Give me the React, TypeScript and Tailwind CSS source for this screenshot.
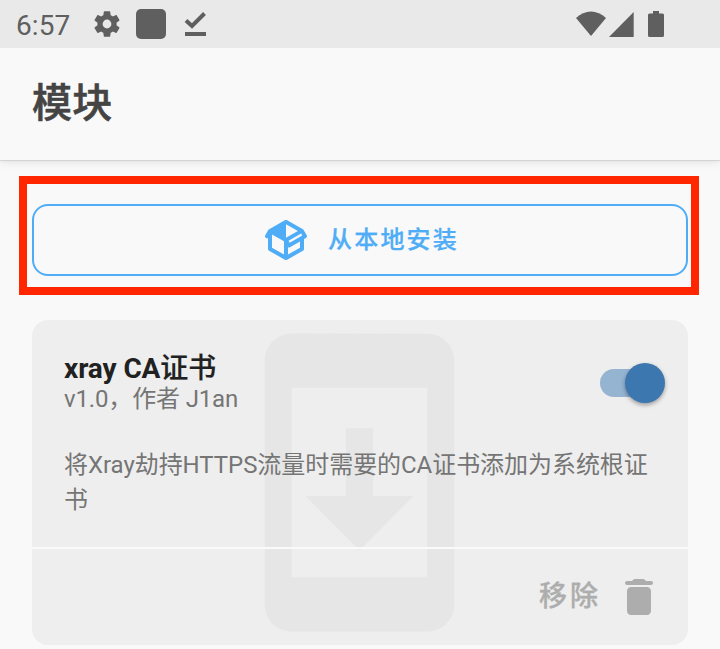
import React from "react";

function StatusBar() {
  return (
    <div className="relative z-10 flex h-12 items-start bg-[#e9e9e9] text-[#5f5f5f]">
      <span className="ml-4 mt-2 w-[74px] whitespace-nowrap text-[28px] leading-9 tracking-[0.1px]">6:57</span>
      <svg className="ml-px mt-2 size-8" viewBox="0 0 24 24" fill="currentColor">
        <path d="M19.14 12.94c.04-.3.06-.61.06-.94 0-.32-.02-.64-.07-.94l2.03-1.58c.18-.14.23-.41.12-.61l-1.92-3.32c-.12-.22-.37-.29-.59-.22l-2.39.96c-.5-.38-1.03-.7-1.62-.94l-.36-2.54c-.04-.24-.24-.41-.48-.41h-3.84c-.24 0-.43.17-.47.41l-.36 2.54c-.59.24-1.13.57-1.62.94l-2.39-.96c-.22-.08-.47 0-.59.22L2.74 8.87c-.12.21-.08.47.12.61l2.03 1.58c-.05.3-.09.63-.09.94s.02.64.07.94l-2.03 1.58c-.18.14-.23.41-.12.61l1.92 3.32c.12.22.37.29.59.22l2.39-.96c.5.38 1.03.7 1.62.94l.36 2.54c.05.24.24.41.48.41h3.84c.24 0 .44-.17.47-.41l.36-2.54c.59-.24 1.13-.56 1.62-.94l2.39.96c.22.08.47 0 .59-.22l1.92-3.32c.12-.22.07-.47-.12-.61l-2.01-1.58zM12 15.3a3.3 3.3 0 1 1 0-6.6 3.3 3.3 0 0 1 0 6.6z" />
      </svg>
      <div className="ml-[13px] mt-[9px] h-[30px] w-[30px] rounded-[5px] bg-[#5f5f5f]" />
      <svg className="ml-[18px] mt-[10px] h-7 w-6" viewBox="0 0 24 28" fill="none" stroke="currentColor">
        <path d="M2 10.500L8 16L20.500 3.500" strokeWidth="4" />
        <path d="M1 24H22" strokeWidth="4" />
      </svg>
      <svg className="ml-auto mr-[54px] mt-2 h-8 w-[90px]" viewBox="0 0 90 32" fill="currentColor">
        <path d="M0 10C9 1.200 21 1.200 30 10L15 28Z" />
        <path d="M33 29L57.700 4V29Z" />
        <path d="M77 3h6v2.500h3.500q1.500 0 1.500 1.500v20.500q0 1.500-1.500 1.500h-13q-1.500 0-1.500-1.500V7q0-1.500 1.500-1.500h3.500z" />
      </svg>
    </div>
  );
}

function InstallButton() {
  return (
    <div className="ml-[19px] mt-4 h-[119px] w-[680px] border-8 border-[#ff2600] px-[5px] pt-5">
      <button className="flex h-[72px] w-[656px] items-center rounded-2xl border-2 border-[#4fadf7] pl-[228px] text-[#4fadf7]">
        <svg className="size-12 shrink-0" viewBox="0 0 24 24" fill="currentColor">
          <path d="M2,10.96C1.5,10.68 1.35,10.07 1.63,9.59L3.13,7C3.24,6.8 3.41,6.66 3.6,6.58L11.43,2.18C11.59,2.06 11.79,2 12,2C12.21,2 12.41,2.06 12.57,2.18L20.47,6.62C20.66,6.72 20.82,6.88 20.91,7.08L22.36,9.6C22.64,10.08 22.47,10.69 22,10.96L21,11.54V16.5C21,16.88 20.79,17.21 20.47,17.38L12.57,21.82C12.41,21.94 12.21,22 12,22C11.79,22 11.59,21.94 11.43,21.82L3.53,17.38C3.21,17.21 3,16.88 3,16.5V10.96C2.7,11.13 2.32,11.14 2,10.96M12,4.15V10.85L17.96,7.5L12,4.15M5,15.91L11,19.29V12.58L5,9.21V15.91M19,15.91V12.69L14,15.59C13.67,15.77 13.3,15.76 13,15.6V19.29L19,15.91M13.85,13.36L20.13,9.73L19.55,8.72L13.27,12.35L13.85,13.36Z" />
        </svg>
        <span className="ml-[18px] whitespace-nowrap text-2xl font-medium tracking-[2.2px] [-webkit-text-stroke:0.25px_currentColor]">从本地安装</span>
      </button>
    </div>
  );
}

function Toggle() {
  return (
    <div className="mr-[23px] mt-[43px] flex h-10 w-[65px] items-center">
      <div className="flex h-7 w-[60px] items-center rounded-full bg-[#95b4d2]">
        <div className="ml-[25px] size-10 shrink-0 rounded-full bg-[#3d77af] shadow-[0_2px_4px_rgba(0,0,0,0.35)]" />
      </div>
    </div>
  );
}

function ModuleCard() {
  return (
    <div className="relative ml-8 mt-[25px] h-[325px] w-[656px] overflow-hidden rounded-2xl bg-[#eeeeee]">
      <svg className="absolute left-[165px] top-0 size-[325px] text-[#e6e6e6]" viewBox="0 0 24 24" fill="currentColor">
        <path d="M17 1.01L7 1c-1.1 0-2 .9-2 2v18c0 1.1.9 2 2 2h10c1.1 0 2-.9 2-2V3c0-1.1-.9-1.990-2-1.990zM17 19H7V5h10v14zm-1-6h-3V8h-2v5H8l4 4 4-4z" />
      </svg>
      <div className="relative flex h-full flex-col">
        <div className="flex h-[227px] flex-col">
          <div className="flex justify-between">
            <div className="ml-8 mt-[33px] whitespace-nowrap">
              <h2 className="text-[28px] font-bold leading-8 tracking-[-0.1px] text-[#212121]">xray CA<span className="font-medium [-webkit-text-stroke:0.2px_currentColor]">证书</span></h2>
              <p className="-mt-px text-2xl leading-[30px] tracking-[-0.15px] text-[#757575]">v1.0，作者 J1an</p>
            </div>
            <Toggle />
          </div>
          <p className="ml-8 mt-[34px] w-[592px] text-2xl leading-[35px] tracking-[-0.05px] text-[#757575]">将Xray劫持HTTPS流量时需要的CA证书添加为系统根证书</p>
        </div>
        <div className="h-[2px] shrink-0 bg-[#fafafa]" />
        <div className="flex flex-1 items-center justify-end pr-[25px] text-[#adadad]">
          <span className="pb-px text-[28px] font-medium tracking-[3px] [-webkit-text-stroke:0.3px_currentColor]">移除</span>
          <svg className="ml-[14px] size-12" viewBox="0 0 24 24" fill="currentColor">
            <path d="M6 19c0 1.100.9 2 2 2h8c1.100 0 2-.9 2-2V9c0-1.100-.9-2-2-2H8c-1.100 0-2 .9-2 2v10zM18 4h-2.500l-.71-.71c-.18-.18-.44-.29-.7-.29H9.910c-.26 0-.52.11-.7.29L8.500 4H6c-.55 0-1 .45-1 1s.45 1 1 1h12c.55 0 1-.45 1-1s-.45-1-1-1z" />
          </svg>
        </div>
      </div>
    </div>
  );
}

export default function App() {
  return (
    <div className="h-[649px] w-[720px] overflow-hidden bg-[#f9f9f9] font-[Roboto,'Noto_Sans_CJK_SC',sans-serif]">
      <StatusBar />
      <header className="h-28 bg-[#f9f9f9] pl-8 pt-7 shadow-[0_1px_1px_rgba(0,0,0,0.1),0_3px_8px_rgba(0,0,0,0.08)]">
        <h1 className="text-[40px] font-medium leading-[56px] tracking-[0.3px] text-[#444444] [-webkit-text-stroke:0.6px_currentColor]">模块</h1>
      </header>
      <main>
        <InstallButton />
        <ModuleCard />
      </main>
    </div>
  );
}
